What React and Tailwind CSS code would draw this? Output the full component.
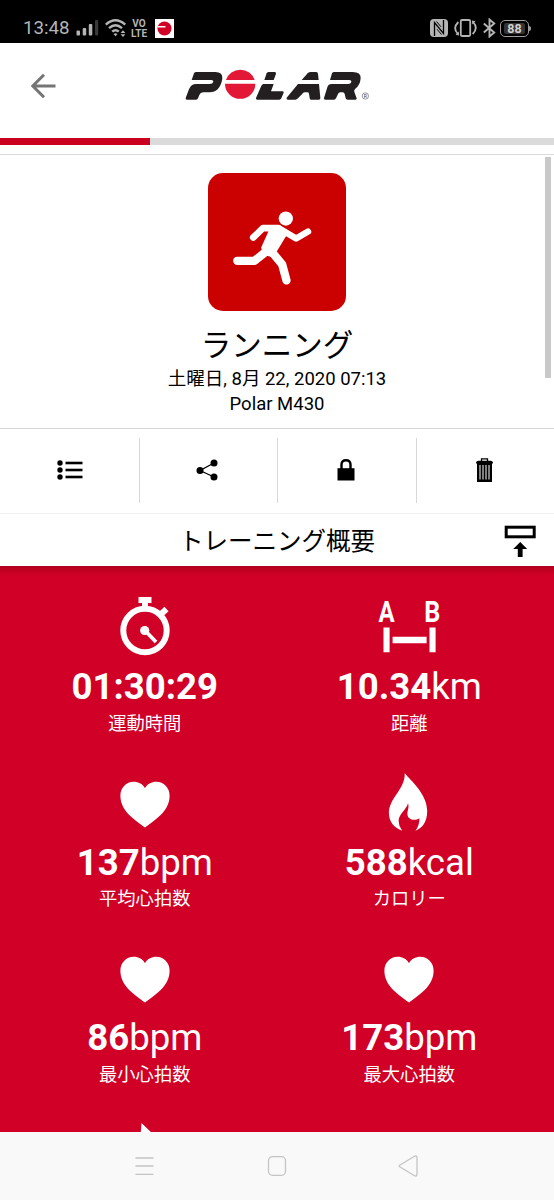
import { Fragment } from 'react';

const STATS = [
  { icon: 'stopwatch', value: '01:30:29', unit: '', label: '運動時間' },
  { icon: 'distance', value: '10.34', unit: 'km', label: '距離' },
  { icon: 'heart', value: '137', unit: 'bpm', label: '平均心拍数' },
  { icon: 'flame', value: '588', unit: 'kcal', label: 'カロリー' },
  { icon: 'heart', value: '86', unit: 'bpm', label: '最小心拍数' },
  { icon: 'heart', value: '173', unit: 'bpm', label: '最大心拍数' },
];

function StatusBar() {
  return (
    <div className="flex h-[43px] shrink-0 items-start justify-between bg-black pl-[23px] pr-[23px] pt-[17px] text-[#b5b5b5]">
      <div className="flex h-[22px] items-center">
        <span className="w-[47px] text-[18.7px] leading-[22px]">13:48</span>
        <svg className="ml-[6px] h-[22px] w-[23px]" viewBox="0 0 23 22" fill="currentColor">
          <rect x="0.5" y="13.5" width="3.5" height="5" rx="1" />
          <rect x="6.7" y="11" width="3.5" height="7.5" rx="1" />
          <rect x="12.8" y="7" width="3.5" height="11.5" rx="1" />
          <rect x="19" y="3" width="3.2" height="15.5" rx="1" fill="#3a3a3a" />
        </svg>
        <svg className="ml-[6px] h-[22px] w-[23px]" viewBox="0 0 23 22" fill="none" stroke="currentColor" strokeWidth="2.4">
          <path d="M.8 7.600Q10.500-.9 20.200 7.600M4 11.200Q10.500 5.400 17 11.200M7.200 14.700Q10.500 11.600 13.800 14.700" />
          <path d="M8.500 17Q10.500 15.500 12.500 17L10.500 19.300Z" fill="currentColor" stroke="none" />
          <path d="M15.600 16L18 13.200L20.400 16ZM15.600 17.200L18 20L20.400 17.200Z" fill="currentColor" stroke="none" />
        </svg>
        <svg className="ml-[2px] h-[19px] w-[18px] overflow-visible" viewBox="0 0 18 19" fill="currentColor">
          <text x="9" y="8" fontSize="10" fontWeight="bold" textAnchor="middle">VO</text>
          <text x="9" y="17.500" fontSize="10" fontWeight="bold" textAnchor="middle">LTE</text>
        </svg>
        <svg className="ml-[7px] h-[19px] w-[19px]" viewBox="0 0 19 19">
          <rect width="19" height="19" fill="#fff" />
          <circle cx="9.500" cy="9.500" r="7" fill="#d10027" />
          <path d="M2.500 7H10.500V8.500H2.500Z" fill="#fff" />
        </svg>
      </div>

      <div className="flex h-[22px] items-center">
        <svg className="h-[20px] w-[18px]" viewBox="0 0 18 20">
          <rect y="1" width="18" height="18" rx="4" fill="currentColor" />
          <path d="M4.500 18V4.500L13.500 15.500V2" fill="none" stroke="#000" strokeWidth="1.300" />
          <path d="M6.500 3.500L11 8.800M7 11.200L11.500 16.500" fill="none" stroke="#000" strokeWidth="1" />
        </svg>
        <svg className="ml-[6px] h-[20px] w-[23px]" viewBox="0 0 23 20" fill="none" stroke="currentColor" strokeWidth="1.800">
          <rect x="6.800" y="2" width="9.400" height="16" rx="1.200" />
          <path d="M4.300 4Q-1.500 10 3.500 15.500M18.700 16Q24.500 10 19.500 4.500" />
          <path d="M1.500 16.800L5 17.500L4.800 13.500ZM21.500 3.200L18 2.500L18.200 6.500Z" fill="currentColor" stroke="none" />
        </svg>
        <svg className="ml-[6px] h-[20px] w-[13px]" viewBox="0 0 13 20" fill="none" stroke="currentColor" strokeWidth="1.900">
          <path d="M.8 5.500L11.200 14.500L6.500 18.500V1.500L11.200 5.500L.8 14.500" />
        </svg>
        <div className="ml-[4px] flex items-center">
          <div className="flex h-[17px] w-[29px] items-center justify-center rounded-[5px] border-[1.5px] border-[#9c9c9c]">
            <span className="h-[11px] w-[21px] rounded-[2px] bg-[#333] text-center text-[12.5px] font-bold leading-[11px] text-[#d0d0d0]">
              88
            </span>
          </div>
          <span className="h-[5px] w-[2px] rounded-r bg-[#9c9c9c]" />
        </div>
      </div>
    </div>
  );
}

function PolarLogo() {
  return (
    <svg className="h-[50px] w-[200px]" viewBox="0 0 600 150">
      <g fill="#231f20">
        <path d="M44 60L51 40Q53 36 58 36H115Q137 36 136 55Q134 75 122 88Q113 97 98 97H78Q70 97 67 105L63 115Q62 119 57 119H30Q25 119 26 114L36 88Q42 72 58 72H98Q107 72 109 66Q110 60 103 60Z" />
        <path d="M262 60L269 40Q271 36 276 36H293Q298 36 297 41L290 60Z" />
        <path d="M258 72H290L282 94H316Q321 94 320 98L313 115Q311 119 307 119H241Q236 119 237 114L253 77Z" />
        <path d="M374 60L392 40Q396 36 401 36H418Q422 36 423 41L425 60Z" />
        <path d="M363 72H426L430 114Q430 119 426 119H402Q398 119 398 114L396 101Q395 97 391 97H384Q380 97 376 101L363 115Q359 119 355 119H333Q327 119 329 113Z" />
        <path d="M459 60L465 40Q467 36 472 36H527Q552 36 551 55Q549 77 535 86Q530 90 532 96L539 115Q540 119 535 119H512Q507 119 506 115L503 102Q502 97 497 97H490Q485 97 483 102L477 115Q475 119 471 119H445Q440 119 441 114L451 82Q454 72 464 72H513Q522 72 523 66Q524 60 516 60Z" />
      </g>
      <path d="M147 60A45 44 0 0 1 233 60ZM144 71H235A45.500 45.500 0 1 1 144 71Z" fill="#e31837" />
      <circle cx="565" cy="108" r="9.500" fill="none" stroke="#666" strokeWidth="2" />
      <text x="565" y="113.500" textAnchor="middle" fontSize="15" fill="#444">R</text>
    </svg>
  );
}

function Header() {
  return (
    <header className="grid h-[95px] shrink-0 grid-cols-[177px_200px_177px] pt-[17px]">
      <svg className="ml-[30px] mt-[13px] h-[26px] w-[26px]" viewBox="0 0 26 26" fill="none" stroke="#757575" strokeWidth="3">
        <path d="M25.500 13H3M14 1.800L2.800 13L14 24.200" />
      </svg>
      <PolarLogo />
    </header>
  );
}

function RunnerTile() {
  return (
    <svg className="h-[138px] w-[138px] rounded-[15px] bg-[#cb0000]" viewBox="33 24 415 415">
      <g fill="none" stroke="#fff" strokeLinecap="round" strokeLinejoin="round">
        <path d="M169 218L198 190H244" strokeWidth="20" />
        <path d="M246 190L298 221L334 200" strokeWidth="19" />
        <path d="M121 288H173L208 260" strokeWidth="25" />
        <path d="M223 259L256 299L269 347" strokeWidth="25" />
      </g>
      <path d="M219 190L247 180L273 205L238 263L222 276L198 270L193 248Z" fill="#fff" />
      <circle cx="267" cy="161" r="21.500" fill="#fff" />
    </svg>
  );
}

function TrainingHead() {
  return (
    <section className="relative flex h-[273px] shrink-0 flex-col items-center pt-[18px]">
      <RunnerTile />
      <h1 className="mt-[13px] text-[30.5px] leading-[44px]">ランニング</h1>
      <p className="-mt-[1px] text-[18.5px] leading-[25px]">土曜日, 8月 22, 2020 07:13</p>
      <p className="text-[18.5px] leading-[25px]">Polar M430</p>
      {/* scrollbar thumb */}
      <div className="absolute right-[3px] top-[2px] h-[221px] w-[6px] bg-[#c9c9c9]" />
    </section>
  );
}

function ListIcon() {
  return (
    <svg className="ml-[1px] h-[20px] w-[26px]" viewBox="0 0 26 20">
      {[3, 10, 17].map((y) => (
        <Fragment key={y}>
          <circle cx="3" cy={y} r="2.700" />
          <path d={`M8.500 ${y}H25.500`} stroke="#000" strokeWidth="2.600" />
        </Fragment>
      ))}
    </svg>
  );
}

function ShareIcon() {
  return (
    <svg className="h-[22px] w-[22px]" viewBox="0 0 22 22">
      <path d="M18 4L4 11.500L18 18" fill="none" stroke="#000" strokeWidth="1.300" />
      <circle cx="18" cy="4" r="3.500" />
      <circle cx="4" cy="11.500" r="3.500" />
      <circle cx="18" cy="18" r="3.500" />
    </svg>
  );
}

function LockIcon() {
  return (
    <svg className="h-[22px] w-[18px]" viewBox="0 0 18 22">
      <path d="M4.500 11V5.500Q4.500 1.300 9 1.300T13.500 5.500V11" fill="none" stroke="#000" strokeWidth="2.400" />
      <rect x="0.500" y="9.200" width="17" height="12.300" />
    </svg>
  );
}

function TrashIcon() {
  return (
    <svg className="h-[24px] w-[17px]" viewBox="0 0 17 24">
      <path d="M5.500 3V.8H11.500V3" fill="none" stroke="#000" strokeWidth="1.300" />
      <path d="M0 5.500Q0 2.800 2.500 2.800H14.500Q17 2.800 17 5.500ZM1 5H16V24H1Z" />
      <path d="M4 7V21.500M7 7V21.500M10 7V21.500M13 7V21.500" stroke="#fff" strokeWidth="1" />
    </svg>
  );
}

function Toolbar() {
  const cell = 'flex items-center justify-center pb-[2px]';
  const divided = `${cell} border-l border-[#d8d8d8] pr-[2px]`;
  return (
    <nav className="flex h-[86px] shrink-0 items-start border-y border-t-[#d5d5d5] border-b-[#f0f0f0] pt-[9px]">
      <div className="grid h-[65px] w-full grid-cols-4">
        <button className={cell}><ListIcon /></button>
        <button className={divided}><ShareIcon /></button>
        <button className={divided}><LockIcon /></button>
        <button className={divided}><TrashIcon /></button>
      </div>
    </nav>
  );
}

function SectionTitle() {
  return (
    <div className="grid h-[52px] shrink-0 grid-cols-[50px_1fr_50px] items-center">
      <h2 className="col-start-2 pt-[3px] text-center text-[24.5px] leading-[36px]">トレーニング概要</h2>
      <svg className="mt-[2px] h-[32px] w-[32px]" viewBox="0 0 32 32">
        <rect x="2.200" y="2.200" width="28" height="9.600" fill="none" stroke="#000" strokeWidth="3" />
        <path d="M16.200 17L23.200 24H18.600V32H13.800V24H9.200Z" />
      </svg>
    </div>
  );
}

function StatIcon({ name }) {
  return (
    <svg className="h-[60px] w-[60px] overflow-visible" viewBox="0 0 60 60" fill="#fff">
      {name === 'stopwatch' && (
        <>
          <path d="M23.500 1H36.500V7H33V12H27V7H23.500Z" />
          <path d="M44 20L51.500 13" stroke="#fff" strokeWidth="6" />
          <circle cx="30" cy="34.500" r="21.700" fill="none" stroke="#fff" strokeWidth="6" />
          <circle cx="29.700" cy="34.500" r="4.600" />
          <path d="M30 34.500L41 46" stroke="#fff" strokeWidth="3.800" />
        </>
      )}
      {name === 'distance' && (
        <>
          <text x="0" y="25.700" fontSize="30" fontWeight="bold" textAnchor="middle" transform="translate(7.600 0) scale(.8 1)">A</text>
          <text x="0" y="25.700" fontSize="30" fontWeight="bold" textAnchor="middle" transform="translate(53.300 0) scale(.84 1)">B</text>
          <path d="M4.500 31.500H10.600V56.300H4.500ZM50.500 31.500H56.600V56.300H50.500ZM13.600 40.700H47.600V47.200H13.600Z" />
        </>
      )}
      {name === 'heart' && (
        <path d="M30 55.500C17 46 5.400 38 5.400 23.500C5.400 15.500 11.500 9.700 18.500 9.700C23.500 9.700 28 12 30 16.300C32 12 36.500 9.700 41.500 9.700C48.500 9.700 54.600 15.500 54.600 23.500C54.600 38 43 46 30 55.500Z" />
      )}
      {name === 'flame' && (
        <path d="M25.700 1.200C31.400 8 48.200 22 48.200 39C48.200 50 43.400 56 36.400 58.800C38.900 55.500 40.600 51.500 40.400 46.300C35.400 49.500 28.400 47.500 28.400 42C28.400 38 30.400 35.500 29 31.300C27.400 38 19.600 42 19.600 49Q19.600 54 23.200 58.800C15.400 56 9.900 50 9.900 41C9.900 26 26.400 17 25.700 1.200Z" />
      )}
    </svg>
  );
}

function Stat({ icon, value, unit, label }) {
  return (
    <div className="flex h-[175.500px] flex-col items-center">
      <StatIcon name={icon} />
      <p className="mt-[9px] text-[36.6px] leading-[44px]">
        <strong className="font-bold">{value}</strong>
        {unit}
      </p>
      <p className="mt-[1.500px] text-[18.3px] leading-[26px]">{label}</p>
    </div>
  );
}

function Summary() {
  return (
    <main className="h-[566px] shrink-0 overflow-hidden bg-[#d10026] px-[12.5px] text-white">
      <div className="-mx-[12.5px] h-[30px] bg-linear-to-b from-[#b00020] to-[#d10026] to-[9px]" />
      <div className="grid grid-cols-2">
        {STATS.map((s, i) => (
          <Stat key={i} {...s} />
        ))}
      </div>
      {/* tip of the next row's icon */}
      <svg className="ml-[125px] h-[12px] w-[20px]" viewBox="0 0 20 12">
        <path d="M3.500 0L17 13H2.500Z" fill="#fff" />
      </svg>
    </main>
  );
}

function NavBar() {
  return (
    <footer className="grid h-[68px] shrink-0 grid-cols-[132px_132px_26px_132px_132px] items-center bg-[#f9f9f9] text-[#c4c4c4]">
      <svg className="ml-[134px] h-[22px] w-[22px]" viewBox="0 0 22 22" fill="none" stroke="currentColor" strokeWidth="1.300">
        <path d="M1.500 3H19.500M1.500 11H19.500M1.500 19.300H19.500" />
      </svg>
      <svg className="col-start-3 ml-[2px] h-[22px] w-[22px]" viewBox="0 0 22 22" fill="none" stroke="currentColor" strokeWidth="1.300">
        <rect x="2.500" y="1.700" width="17" height="18.600" rx="4" />
      </svg>
      <svg className="ml-[107px] h-[22px] w-[22px]" viewBox="0 0 22 22" fill="none" stroke="currentColor" strokeWidth="1.300" strokeLinejoin="round">
        <path d="M2.700 10.200L17.500 1.300Q19.800 .2 20 2.500V19.500Q19.800 21.800 17.500 20.700L2.700 11.800Q1.500 11 2.700 10.200Z" />
      </svg>
    </footer>
  );
}

export default function App() {
  return (
    <div className="flex h-[1200px] w-[554px] flex-col overflow-hidden bg-white font-[Roboto,'Noto_Sans_CJK_JP',sans-serif] text-black">
      <StatusBar />
      <Header />
      <div className="h-[7px] shrink-0 bg-[#dadada]">
        <div className="h-full w-[150px] bg-[#ca0021]" />
      </div>
      <div className="h-[10px] shrink-0 border-b-[1.5px] border-[#dadada]" />
      <TrainingHead />
      <Toolbar />
      <SectionTitle />
      <Summary />
      <NavBar />
    </div>
  );
}
